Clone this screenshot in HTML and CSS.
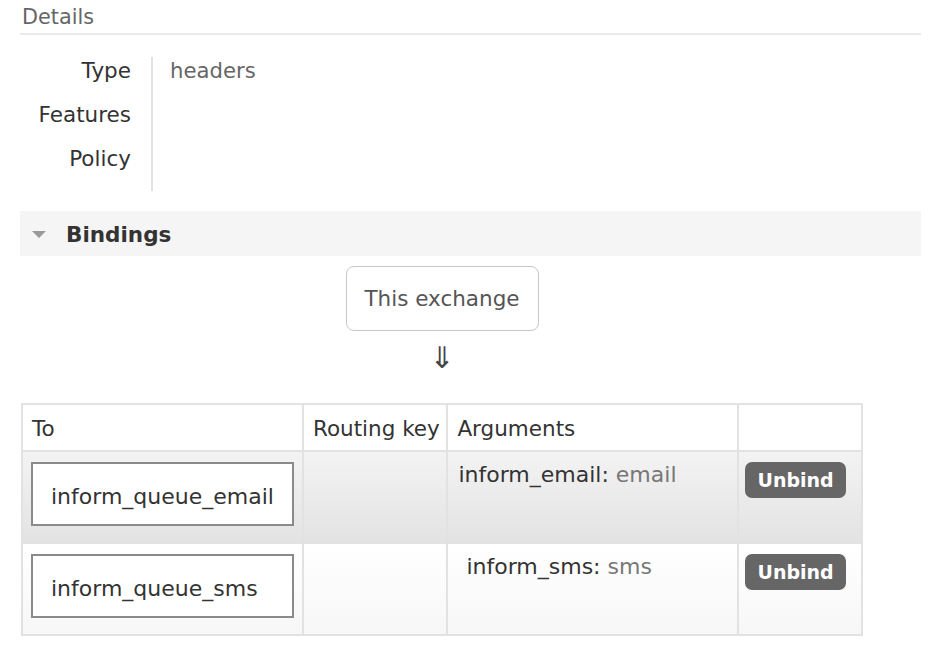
FILE: index.html
```html
<!DOCTYPE html>
<html>
<head>
<meta charset="utf-8">
<link rel="stylesheet" href="styles.css">
</head>
<body>
<div class="page">
  <h3 class="section-title">Details</h3>
  <div class="details">
    <div class="labels">
      <div class="label">Type</div>
      <div class="label">Features</div>
      <div class="label">Policy</div>
    </div>
    <div class="values">
      <div class="value">headers</div>
      <div class="value"></div>
      <div class="value"></div>
    </div>
  </div>

  <div class="bindings-header">
    <span class="triangle"></span>
    <span class="bindings-title">Bindings</span>
  </div>

  <div class="bindings">
    <div class="source">
      <div class="exchange-box">This exchange</div>
      <div class="arrow">⇓</div>
    </div>
    <table class="bind-table">
      <thead>
        <tr>
          <th class="c-to">To</th>
          <th class="c-rk">Routing key</th>
          <th class="c-args">Arguments</th>
          <th class="c-act"></th>
        </tr>
      </thead>
      <tbody>
        <tr class="row-alt1">
          <td><div class="queue">inform_queue_email</div></td>
          <td></td>
          <td class="args"><span class="key">inform_email:</span> <span class="val">email</span></td>
          <td class="act"><span class="btn">Unbind</span></td>
        </tr>
        <tr class="row-alt2">
          <td><div class="queue">inform_queue_sms</div></td>
          <td></td>
          <td class="args args-indent"><span class="key">inform_sms:</span> <span class="val">sms</span></td>
          <td class="act"><span class="btn">Unbind</span></td>
        </tr>
      </tbody>
    </table>
  </div>
</div>
</body>
</html>
```
FILE: styles.css
```css
html, body {
  margin: 0;
  padding: 0;
  background: #fff;
}
body {
  font-family: "DejaVu Sans", Verdana, sans-serif;
  font-size: 21.5px;
  color: #333;
}
.page {
  width: 901px;
  padding-left: 20px;
}
.section-title {
  margin: 0;
  padding: 4px 0 3px 2px;
  font-size: 20.8px;
  line-height: 26px;
  font-weight: normal;
  color: #666;
  border-bottom: 2px solid #ebebeb;
}
.details {
  display: flex;
  margin-top: 22px;
}
.labels {
  width: 111px;
  padding-right: 20px;
  border-right: 2px solid #e2e2e2;
  padding-bottom: 2px;
}
.label {
  height: 44px;
  line-height: 28px;
  text-align: right;
  color: #333;
}
.values {
  padding-left: 17px;
}
.value {
  height: 44px;
  line-height: 28px;
  font-size: 21.2px;
  color: #666;
}
.bindings-header {
  margin-top: 20px;
  height: 45px;
  background: #f5f5f5;
  display: flex;
  align-items: center;
}
.triangle {
  width: 0;
  height: 0;
  margin-left: 12px;
  border-left: 7px solid transparent;
  border-right: 7px solid transparent;
  border-top: 7px solid #9a9a9a;
  margin-top: 2px;
}
.bindings-title {
  margin-left: 20px;
  font-weight: bold;
  color: #333;
  margin-top: 2px;
}
.bindings {
  display: inline-flex;
  flex-direction: column;
  align-items: center;
  margin-left: 1px;
  margin-top: 10px;
}
.source {
  display: flex;
  flex-direction: column;
  align-items: center;
}
.exchange-box {
  box-sizing: border-box;
  width: 193px;
  height: 65px;
  border: 1px solid #c8c8c8;
  border-radius: 8px;
  display: flex;
  align-items: center;
  justify-content: center;
  color: #555;
}
.arrow {
  font-size: 30px;
  line-height: 34px;
  margin-top: 10px;
  color: #444;
}
.bind-table {
  margin-top: 28px;
  border-collapse: collapse;
  width: 842px;
}
.bind-table th,
.bind-table td {
  border: 2px solid #e2e2e2;
  padding: 0;
  text-align: left;
  vertical-align: top;
}
.bind-table th {
  font-weight: normal;
  padding: 10px 0 0 9px;
  line-height: 28px;
  color: #333;
  box-sizing: border-box;
  height: 47px;
}
.c-to { width: 281px; }
.c-rk { width: 145px; }
.c-args { width: 292px; }
.c-act { width: 124px; }
.bind-table td {
  height: 92px;
  box-sizing: border-box;
}
.row-alt1 td {
  background: linear-gradient(#f3f3f3, #e3e3e3);
}
.row-alt2 td {
  background: linear-gradient(#ffffff, #f7f7f7);
}
.queue {
  margin: 10px 0 0 8px;
  width: 263px;
  height: 64px;
  box-sizing: border-box;
  border: 2px solid #8a8a8a;
  background: #fff;
  display: flex;
  align-items: center;
  padding-left: 18px;
  padding-top: 4px;
  font-size: 22px;
  color: #333;
}
.args {
  padding: 9px 0 0 10px !important;
  line-height: 28px;
  font-size: 22px;
}
.args-indent {
  padding-left: 18px !important;
}
.key {
  color: #333;
}
.val {
  color: #777;
}
.act {
  padding: 10px 0 0 6px !important;
}
.btn {
  display: inline-block;
  width: 101px;
  height: 36px;
  box-sizing: border-box;
  background: #666;
  color: #fff;
  font-weight: bold;
  font-size: 19px;
  border-radius: 7px;
  text-align: center;
  line-height: 36px;
}
```
